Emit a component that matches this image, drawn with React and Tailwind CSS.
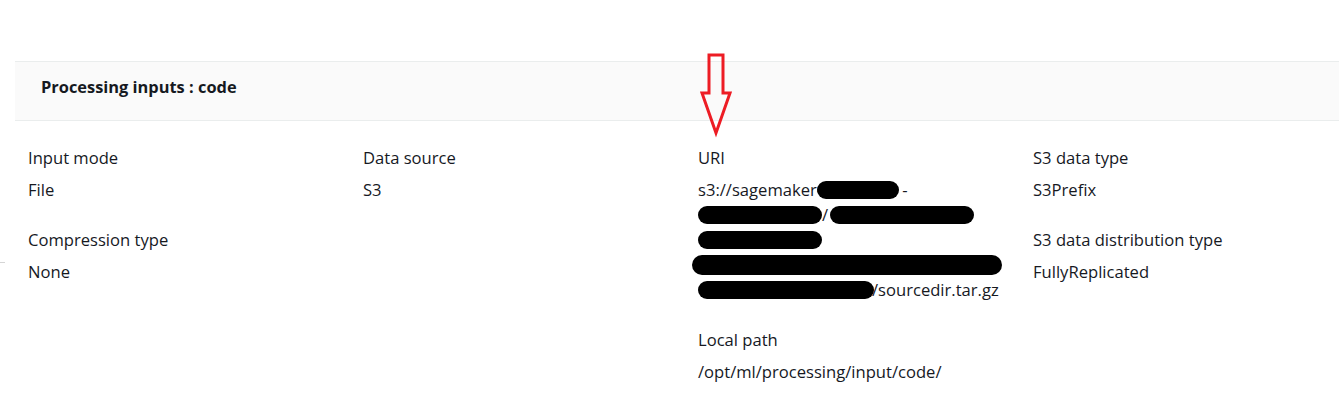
import React from 'react'

const font = { fontFamily: '"Open Sans", "Noto Sans", Arial, sans-serif' }

function Blob({ w, h = 18, className = '' }) {
  return (
    <span
      className={`inline-block shrink-0 bg-black rounded-full align-middle ${className}`}
      style={{ width: w, height: h }}
    />
  )
}

function Field({ label, children }) {
  return (
    <div>
      <div className="leading-[25px] mb-[7px]">{label}</div>
      <div className="leading-[25px]">{children}</div>
    </div>
  )
}

function RedArrow() {
  return (
    <svg
      className="absolute left-[699px] top-[52px]"
      width="34"
      height="86"
      viewBox="0 0 34 86"
    >
      <path
        d="M10 3 H24 V41 H31 L17 81 L3 41 H10 Z"
        fill="none"
        stroke="#ed1c24"
        strokeWidth="3"
        strokeLinejoin="miter"
      />
    </svg>
  )
}

export default function App() {
  return (
    <div className="relative w-[1339px] h-[418px] bg-white text-[16.6px] text-[#16191f]" style={font}>
      <div className="h-[61px]" />
      <div className="ml-[15px] h-[60px] bg-[#fafafa] border-y border-[#eaeded] flex items-center pl-[26px] pb-[8px]">
        <h2 className="text-[16.4px] font-bold leading-none">Processing inputs : code</h2>
      </div>

      <div className="grid grid-cols-[335px_335px_335px_1fr] pl-[28px] pt-6">
        <div className="flex flex-col gap-[25px]">
          <Field label="Input mode">File</Field>
          <Field label="Compression type">None</Field>
        </div>
        <div className="flex flex-col gap-[25px]">
          <Field label="Data source">S3</Field>
        </div>
        <div className="flex flex-col gap-[25px]">
          <Field label="URI">
            <div className="flex items-center h-[25px]">
              <span>s3://sagemaker-</span>
              <Blob w={82} className="-ml-[5px]" />
              <span className="ml-[3px]">-</span>
            </div>
            <div className="flex items-center h-[25px]">
              <Blob w={124} />
              <span>/</span>
              <Blob w={144} className="ml-[2px]" />
            </div>
            <div className="flex items-center h-[25px]">
              <Blob w={124} />
            </div>
            <div className="flex items-center h-[25px]">
              <Blob w={310} h={20} className="-ml-[6px]" />
            </div>
            <div className="flex items-center h-[25px]">
              <Blob w={176} />
              <span className="-ml-[2px]">/sourcedir.tar.gz</span>
            </div>
          </Field>
          <Field label="Local path">/opt/ml/processing/input/code/</Field>
        </div>
        <div className="flex flex-col gap-[25px]">
          <Field label="S3 data type">S3Prefix</Field>
          <Field label="S3 data distribution type">FullyReplicated</Field>
        </div>
      </div>

      <span className="absolute left-0 top-[262px] w-[5px] h-px bg-[#d5d5d5]" />
      <RedArrow />
    </div>
  )
}
